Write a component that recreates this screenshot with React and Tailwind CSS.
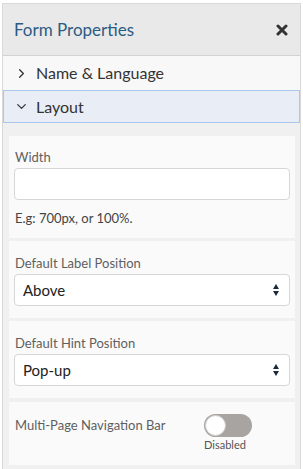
import { ChevronRight, ChevronDown } from 'lucide-react'

function Card({ children, className = '' }) {
  return <div className={`bg-[#fafafa] px-[5px] ${className}`}>{children}</div>
}

function Label({ children }) {
  return <div className="pl-[1px] text-[13px] leading-[16px] text-[#5f5f5f]">{children}</div>
}

function Select({ value }) {
  return (
    <div className="flex h-[32px] items-center justify-between rounded-[4px] border border-[#d6d6d6] bg-white pl-[8px] pr-[10px]">
      <span className="text-[15px] text-[#222]">{value}</span>
      <span className="flex flex-col items-center leading-none text-[#1d2a3a]">
        <svg width="6" height="5" viewBox="0 0 6 5"><path d="M3 0L6 5H0z" fill="currentColor" /></svg>
        <svg width="6" height="5" viewBox="0 0 6 5" className="mt-[2px]"><path d="M0 0H6L3 5z" fill="currentColor" /></svg>
      </span>
    </div>
  )
}

export default function App() {
  return (
    <div className="h-[469px] w-[303px] overflow-hidden bg-white pl-[2px] pt-[3px]" style={{ fontFamily: 'Lato, "Open Sans", sans-serif' }}>
      <div className="h-[480px] w-[299px] border border-[#d9d9d9] bg-[#f0f0f0]">
        <div className="flex h-[52px] items-center justify-between border-b border-[#d2d2d2] bg-[#e9e9e9] pl-[11px] pr-[12px]">
          <h1 className="text-[17px] text-[#2c5b84]">Form Properties</h1>
          <svg width="12" height="12" viewBox="0 0 12 12" className="text-[#333]">
            <path d="M2 2L10 10M10 2L2 10" stroke="currentColor" strokeWidth="3" strokeLinecap="round" />
          </svg>
        </div>
        <div className="flex h-[34px] items-center gap-[7px] bg-[#f8f8f8] pl-[11px] text-[16px] text-[#333]">
          <ChevronRight size={15} strokeWidth={2} />
          <span>Name &amp; Language</span>
        </div>
        <div className="flex h-[33px] items-center gap-[7px] border border-[#a8c7ee] bg-[#e9edf6] pl-[10px] text-[16px] text-[#333]">
          <ChevronDown size={15} strokeWidth={2} />
          <span>Layout</span>
        </div>

        <div className="flex flex-col gap-[3px] pl-[6px] pr-[5px] pt-[13px]">
          <Card className="pt-[13px] pb-[12px]">
            <Label>Width</Label>
            <div className="mt-[3px] h-[32px] rounded-[4px] border border-[#d6d6d6] bg-white" />
            <div className="mt-[10px] pl-[1px] text-[13px] leading-[16px] text-[#444]">E.g: 700px, or 100%.</div>
          </Card>
          <Card className="pt-[14px] pb-[12px]">
            <Label>Default Label Position</Label>
            <div className="mt-[3px]"><Select value="Above" /></div>
          </Card>
          <Card className="pt-[14px] pb-[12px]">
            <Label>Default Hint Position</Label>
            <div className="mt-[3px]"><Select value="Pop-up" /></div>
          </Card>
          <Card className="mt-[1px] flex h-[63px] pt-[12px]">
            <div className="w-[190px] pt-[3px]"><Label>Multi-Page Navigation Bar</Label></div>
            <div className="flex flex-col items-start">
              <div className="flex h-[23px] w-[48px] items-center rounded-full bg-[#a8a4a1] pl-[1px]">
                <div className="h-[21px] w-[21px] rounded-full border border-[#d0cdca] bg-white" />
              </div>
              <span className="mt-[1px] text-[11px] leading-[14px] text-[#555]">Disabled</span>
            </div>
          </Card>
        </div>
      </div>
    </div>
  )
}
